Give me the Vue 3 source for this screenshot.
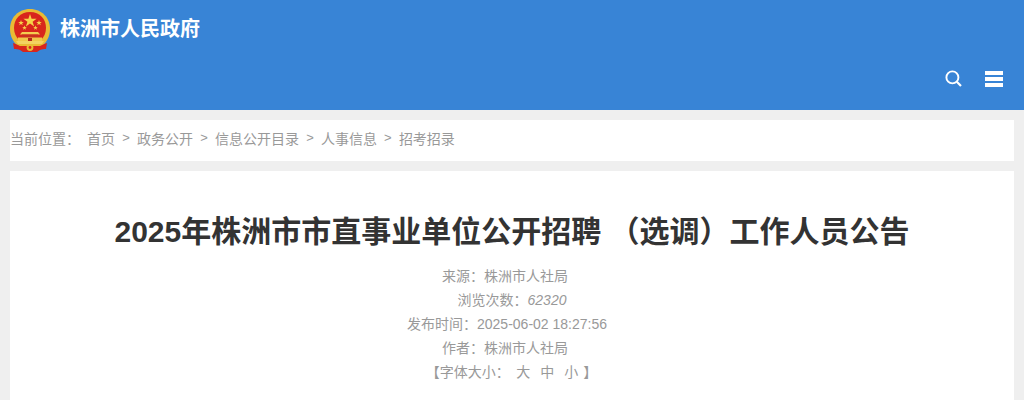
<template>
  <div class="page">
    <header class="top">
      <div class="brand">
        <svg class="emblem" width="40" height="44" viewBox="0 0 40 44">
          <!-- wheat ring -->
          <path d="M20 1C8 1 0 10 0 21c0 8 4 14 9 18h22c5-4 9-10 9-18C40 10 32 1 20 1z" fill="#e9bb34" />
          <path d="M20 4C10 4 4 11 4 20c0 5 2 9 5 12h22c3-3 5-7 5-12 0-9-6-16-16-16z" fill="#d8261c" />
          <!-- stars -->
          <polygon points="20,6 21.6,10.7 26.6,10.7 22.6,13.7 24.1,18.4 20,15.6 15.9,18.4 17.4,13.7 13.4,10.7 18.4,10.7" fill="#f6d348" />
          <polygon points="11,12 11.7,14 13.8,14 12.1,15.2 12.8,17.2 11,16 9.2,17.2 9.9,15.2 8.2,14 10.3,14" fill="#f6d348" />
          <polygon points="29,12 29.7,14 31.8,14 30.1,15.2 30.8,17.2 29,16 27.2,17.2 27.9,15.2 26.2,14 28.3,14" fill="#f6d348" />
          <polygon points="14.5,17.5 15.1,19.1 16.8,19.1 15.4,20.1 16,21.8 14.5,20.8 13,21.8 13.6,20.1 12.2,19.1 13.9,19.1" fill="#f6d348" />
          <polygon points="25.5,17.5 26.1,19.1 27.8,19.1 26.4,20.1 27,21.8 25.5,20.8 24,21.8 24.6,20.1 23.2,19.1 24.9,19.1" fill="#f6d348" />
          <!-- gate -->
          <path d="M12 24h16l2 2.5H10z" fill="#f3cd50" />
          <rect x="12" y="26.5" width="16" height="3" fill="#c9301f" />
          <path d="M8 29.5h24v3.5H8z" fill="#f0c64a" />
          <rect x="18" y="30" width="4" height="3" fill="#b3261c" />
          <path d="M6 33h28l-2 3H8z" fill="#f3d261" />
          <!-- ribbon -->
          <path d="M3 35c3 1 5 2 7 3h20c2-1 4-2 7-3l-1 6c-2 0-4 0-6 1l-3 2H13l-3-2c-2-1-4-1-6-1z" fill="#d8261c" />
          <circle cx="20" cy="39.5" r="3.4" fill="#e9bb34" />
          <circle cx="20" cy="39.5" r="1.4" fill="#d8261c" />
        </svg>
        <span class="site-name">株洲市人民政府</span>
      </div>
      <div class="tools">
        <svg class="search" width="18" height="18" viewBox="0 0 18 18" fill="none" stroke="#fff">
          <circle cx="7.4" cy="7.4" r="6" stroke-width="1.9" />
          <path d="M11.8 11.8L16 16" stroke-width="2.2" />
        </svg>
        <div class="menu"><i></i><i></i><i></i></div>
      </div>
    </header>

    <nav class="crumbs">
      <span class="here">当前位置：</span>
      <template v-for="(c, i) in crumbs" :key="c">
        <span v-if="i" class="sep">&gt;</span>
        <span>{{ c }}</span>
      </template>
    </nav>

    <main class="article">
      <h1>2025年株洲市市直事业单位公开招聘 （选调）工作人员公告</h1>
      <div class="meta">
        <p class="off-14">来源：株洲市人社局</p>
        <p>浏览次数：<em>62320</em></p>
        <p class="off-10">发布时间：2025-06-02 18:27:56</p>
        <p class="off-14">作者：株洲市人社局</p>
        <p class="size">【<b>字体大小：</b><span>大</span><span>中</span><span>小</span>】</p>
      </div>
    </main>
  </div>
</template>

<script setup>
const crumbs = ['首页', '政务公开', '信息公开目录', '人事信息', '招考招录']
</script>

<style>
html, body {
  margin: 0;
  background: #eee;
  overflow: hidden;
}
</style>

<style scoped>
.page {
  width: 1024px;
  height: 400px;
  overflow: hidden;
  background: #efefef;
  font-family: "Liberation Sans", "Noto Sans CJK SC", sans-serif;
}

.top {
  height: 110px;
  box-sizing: border-box;
  background: #3884d6;
  display: flex;
  flex-direction: column;
  justify-content: space-between;
  padding: 8px 21px 22px 10px;
}

.brand {
  display: flex;
  align-items: flex-start;
  gap: 10px;
}

.site-name {
  margin-top: 9px;
  color: #fff;
  font-size: 20px;
  line-height: 24px;
  font-weight: 700;
}

.tools {
  display: flex;
  justify-content: flex-end;
  align-items: center;
  gap: 22px;
}

.menu {
  width: 18px;
  display: flex;
  flex-direction: column;
  gap: 2.5px;
}

.menu i {
  display: block;
  height: 3.5px;
  background: #fff;
}

.crumbs {
  margin: 10px 10px 0;
  height: 41px;
  padding-bottom: 6px;
  box-sizing: border-box;
  background: #fff;
  display: flex;
  align-items: center;
  color: #999;
  font-size: 14px;
}

.here {
  margin-right: 7px;
}

.sep {
  margin: 0 7.2px;
  font-size: 13px;
}

.article {
  margin: 10px 10px 0;
  height: 229px;
  background: #fff;
  text-align: center;
}

h1 {
  margin: 0;
  padding-top: 41px;
  font-size: 30px;
  line-height: 40px;
  font-weight: 700;
  color: #333;
}

.meta {
  margin-top: 12px;
  color: #999;
  font-size: 14px;
}

.meta p {
  margin: 0;
  line-height: 24px;
}

.off-14 {
  padding-right: 14px;
}

.off-10 {
  padding-right: 10px;
}

.meta em {
  font-style: italic;
}

.size {
  padding-right: 1px;
}

.size b {
  font-weight: 400;
  margin-right: 1.5px;
}

.size span {
  margin: 0 5px;
}
</style>
